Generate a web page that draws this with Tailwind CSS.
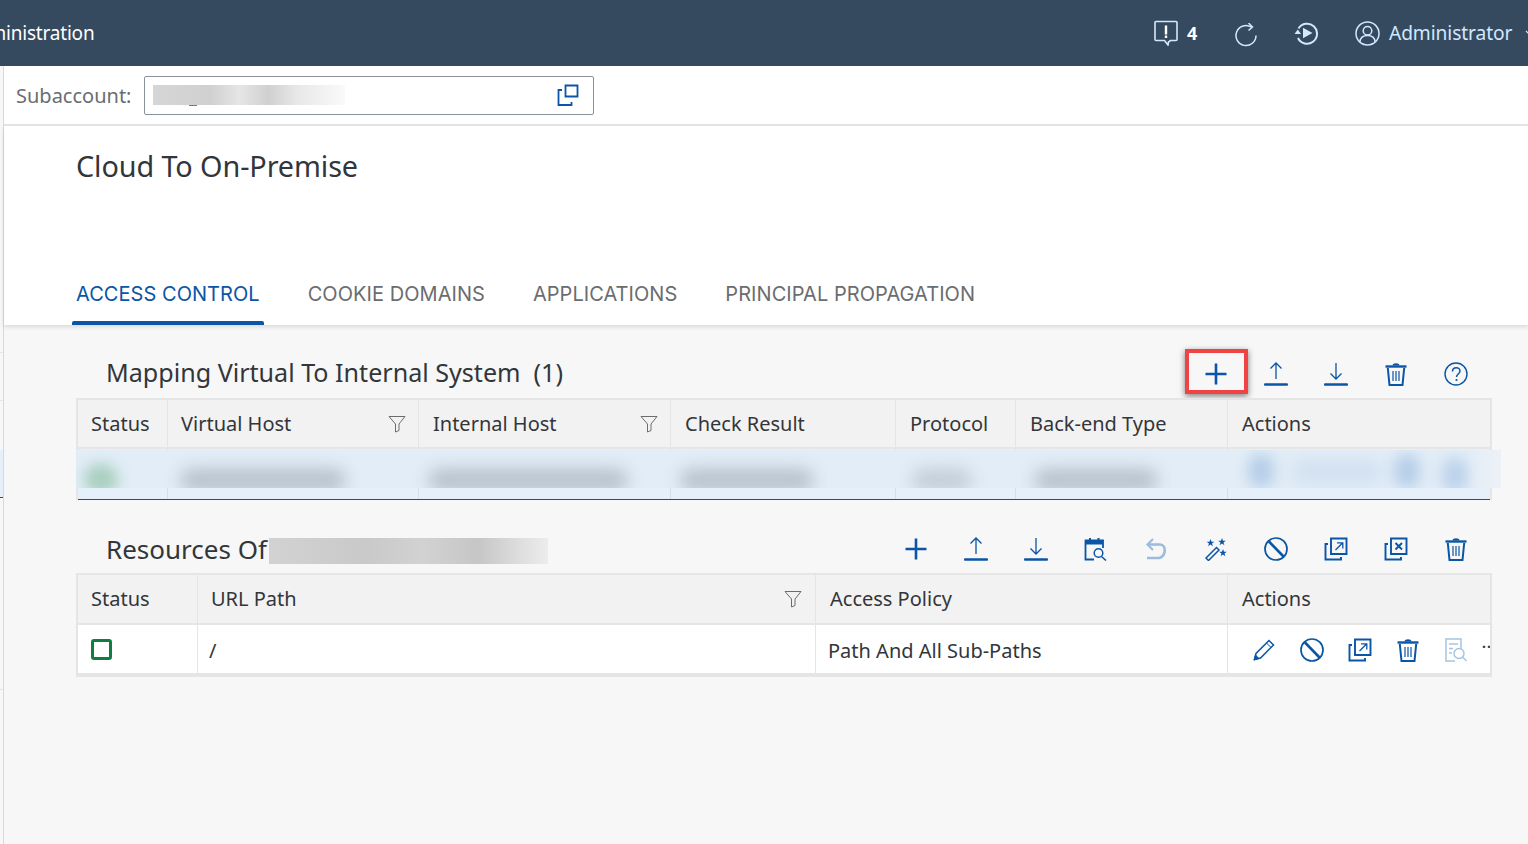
<!DOCTYPE html>
<html lang="en">
<head>
  <meta charset="UTF-8" />
  <title>Cloud To On-Premise</title>
  <script src="https://cdn.jsdelivr.net/npm/@tailwindcss/browser@4"></script>
</head>
<body class="bg-[#f7f7f7] font-['Noto_Sans',sans-serif] text-[#32363a] overflow-hidden">
  <svg class="hidden">
    <symbol id="plus" viewBox="0 0 24 24"><path d="M12 1.500v21M1.500 12h21" fill="none" stroke="currentColor" stroke-width="2.600"/></symbol>
    <symbol id="upload" viewBox="0 0 24 24"><path d="M12 1v16M6.500 6.500 12 1l5.500 5.500" fill="none" stroke="currentColor" stroke-width="1.300"/><path d="M1 22.500h22" stroke="currentColor" stroke-width="2.400" stroke-linecap="round"/></symbol>
    <symbol id="download" viewBox="0 0 24 24"><path d="M12 1v16M6.500 11.500 12 17l5.500-5.500" fill="none" stroke="currentColor" stroke-width="1.300"/><path d="M1 22.500h22" stroke="currentColor" stroke-width="2.400" stroke-linecap="round"/></symbol>
    <symbol id="trash" viewBox="0 0 24 24"><path d="M1.500 4.500h21" stroke="currentColor" stroke-width="2.400"/><path d="M8.500 3.500c0-3 7-3 7 0" fill="currentColor"/><path d="M3.800 6 5.500 23h13l1.700-17" fill="none" stroke="currentColor" stroke-width="2"/><path d="M9 9v10M12 9v10M15 9v10" stroke="currentColor" stroke-width="1.200"/></symbol>
    <symbol id="block" viewBox="0 0 24 24"><circle cx="12" cy="12" r="11" fill="none" stroke="currentColor" stroke-width="1.700"/><path d="m4.500 4 15.500 16" stroke="currentColor" stroke-width="2.600"/></symbol>
    <symbol id="popout" viewBox="0 0 24 24"><path d="M7 1.500h15.500V17H7z" fill="none" stroke="currentColor" stroke-width="1.900"/><path d="M4 7H1.500v15.500H17V20" fill="none" stroke="currentColor" stroke-width="1.900"/><path d="m11.500 13 7-7M13 5.800h5.800v5.800" fill="none" stroke="currentColor" stroke-width="1.300"/></symbol>
    <symbol id="filter" viewBox="0 0 18 18"><path d="M1 1.500h16l-6 7.500v6.500l-3.500 1.500V9z" fill="none" stroke="currentColor" stroke-width="1"/></symbol>
  </svg>

  <header class="h-[66px] bg-[#354a5f] flex items-center overflow-hidden text-[#d1e8ff]">
    <div class="ml-[-35px] w-[1196px] shrink-0 text-[19px] tracking-[-0.2px] text-white">Administration</div>
    <svg class="w-[26px] h-[26px] ml-[-8px] shrink-0" viewBox="0 0 26 26"><path d="M3 1.500h20a1 1 0 0 1 1 1v17a1 1 0 0 1-1 1h-5.500l-2 1.500-.5 3-3.500-4.500H3a1 1 0 0 1-1-1v-17a1 1 0 0 1 1-1z" fill="none" stroke="currentColor" stroke-width="1.600"/><path d="M13 5.500v9M13 15.500v2.500" stroke="#fff" stroke-width="2.400"/></svg>
    <span class="ml-[8px] text-[18px] font-bold text-white w-[12px] shrink-0">4</span>
    <svg class="w-[24px] h-[24px] ml-[35px] mt-[3px] shrink-0" viewBox="0 0 24 24"><path d="M17.500 4.200A10 10 0 1 0 22 12.500" fill="none" stroke="currentColor" stroke-width="1.500"/><path d="m14.500 0 4 4-4 3.500" fill="none" stroke="currentColor" stroke-width="1.500"/></svg>
    <svg class="w-[24px] h-[24px] ml-[36px] shrink-0" viewBox="0 0 24 24"><path d="M4.500 7.500A10 10 0 1 1 4 17" fill="none" stroke="currentColor" stroke-width="2"/><path d="M.5 13 3.800 8.500 7 13z" fill="currentColor"/><path d="M9 6.800v10.400l9.500-5.200z" fill="currentColor"/></svg>
    <svg class="w-[25px] h-[25px] ml-[37px] shrink-0" viewBox="0 0 25 25"><circle cx="12.500" cy="12.500" r="11.500" fill="none" stroke="currentColor" stroke-width="1.500"/><circle cx="12.500" cy="9.800" r="4.300" fill="none" stroke="currentColor" stroke-width="1.500"/><path d="M4.800 21c.5-4.500 3.500-6.500 7.700-6.500s7.200 2 7.700 6.500" fill="none" stroke="currentColor" stroke-width="1.500"/></svg>
    <span class="ml-[9px] text-[19.200px] tracking-[-0.1px] whitespace-nowrap shrink-0">Administrator</span>
    <svg class="w-[10px] h-[6px] ml-[13px] shrink-0" viewBox="0 0 10 6"><path d="m1 1 4 4 4-4" fill="none" stroke="currentColor" stroke-width="1.200"/></svg>
  </header>

  <div class="flex">
    <aside class="w-[4px] shrink-0 h-[778px] border-r border-[#d9d9d9] bg-[#f7f7f7] flex flex-col">
      <div class="h-[287px] border-b border-[#e5e5e5]"></div>
      <div class="h-[48px] border-b border-[#e5e5e5]"></div>
      <div class="h-[49px]"></div>
      <div class="h-[48px] bg-[#e5f0fa] border-b border-[#0a55a6]"></div>
      <div class="h-[192px] border-b border-[#e5e5e5]"></div>
    </aside>

    <main class="flex-1 min-w-0">
      <div class="h-[60px] bg-white border-b-2 border-[#e5e5e5] flex items-center pl-[12px]">
        <span class="text-[20px] text-[#6a6d70] w-[128px] pt-[2px]">Subaccount:</span>
        <div class="w-[450px] h-[39px] bg-white border border-[#89919a] rounded-[2px] flex items-center pl-[8px] pr-[14px] justify-between">
          <div class="relative w-[192px] h-[20px] bg-[linear-gradient(90deg,#d6d6d6,#d0d0d0_30%,#e6e6e6_45%,#d0d0d0_60%,#e8e8e8_75%,#fafafa)]">
            <div class="absolute left-[36px] top-[20px] w-[8px] h-[1px] bg-[#777]"></div>
          </div>
          <svg class="w-[22px] h-[22px] text-[#0a55a6]" viewBox="0 0 22 22"><path d="M5 6H1.500v15h13v-3" fill="none" stroke="currentColor" stroke-width="1.800"/><path d="M8.500 1.500h12v11h-12z" fill="none" stroke="currentColor" stroke-width="1.800"/></svg>
        </div>
      </div>

      <div class="h-[199px] bg-white shadow-[0_2px_4px_rgba(0,0,0,0.12)] relative flex flex-col justify-between pl-[72px]">
        <h1 class="text-[28.800px] leading-[40px] pt-[20px] box-content tracking-[-0.1px] text-[#32363a]">Cloud To On-Premise</h1>
        <nav class="flex gap-[48px] font-['Inter',sans-serif] text-[20px] tracking-[0.05px] leading-[28px] text-[#6a6d70] whitespace-nowrap">
          <div class="pb-[17px] text-[#0a55a6] relative">ACCESS CONTROL<div class="absolute left-[-4px] right-[-4px] bottom-0 h-[4px] rounded-t-[2px] bg-[#0a55a6]"></div></div>
          <div>COOKIE DOMAINS</div>
          <div>APPLICATIONS</div>
          <div>PRINCIPAL PROPAGATION</div>
        </nav>
      </div>

      <section class="pl-[72px] w-[1488px]">
        <div class="h-[73px] flex items-end pl-[30px] text-[#0a55a6]">
          <h2 class="text-[25.100px] leading-[48px] mb-[2px] text-[#32363a] whitespace-pre mr-auto">Mapping Virtual To Internal System  (1)</h2>
          <div class="flex items-center gap-[36px] h-[48px] pr-[24px] relative">
            <div class="absolute left-[-19px] top-[-1px] w-[63px] h-[45px] border-[4px] border-[#f04444] shadow-[0_2px_6px_rgba(0,0,0,0.5)]"></div>
            <svg class="w-[24px] h-[24px]"><use href="#plus"/></svg>
            <svg class="w-[24px] h-[24px]"><use href="#upload"/></svg>
            <svg class="w-[24px] h-[24px]"><use href="#download"/></svg>
            <svg class="w-[24px] h-[24px]"><use href="#trash"/></svg>
            <svg class="w-[24px] h-[24px]" viewBox="0 0 24 24"><circle cx="12" cy="12" r="11" fill="none" stroke="currentColor" stroke-width="1.400"/><path d="M8.500 9.500c0-5 7.500-5 7.500-.5 0 3-3.500 3-3.500 6" fill="none" stroke="currentColor" stroke-width="1.500"/><circle cx="12.500" cy="18" r="1.100" fill="currentColor"/></svg>
          </div>
        </div>

        <div class="relative border-x-2 border-[#e5e5e5]">
          <div class="grid grid-cols-[90px_251px_252px_225px_120px_212px_262px] h-[51px] bg-[#f2f2f2] border-y-2 border-[#e5e5e5] text-[20px] items-center">
            <div class="h-full flex items-center pl-[13px] border-r border-[#e5e5e5]">Status</div>
            <div class="h-full flex items-center justify-between pl-[13px] pr-[12px] border-r border-[#e5e5e5]">Virtual Host<svg class="w-[18px] h-[18px] text-[#6a6d70]"><use href="#filter"/></svg></div>
            <div class="h-full flex items-center justify-between pl-[14px] pr-[12px] border-r border-[#e5e5e5]">Internal Host<svg class="w-[18px] h-[18px] text-[#6a6d70]"><use href="#filter"/></svg></div>
            <div class="h-full flex items-center pl-[14px] border-r border-[#e5e5e5]">Check Result</div>
            <div class="h-full flex items-center pl-[14px] border-r border-[#e5e5e5]">Protocol</div>
            <div class="h-full flex items-center pl-[14px] border-r border-[#e5e5e5]">Back-end Type</div>
            <div class="h-full flex items-center pl-[14px]">Actions</div>
          </div>
          <div class="grid grid-cols-[90px_251px_252px_225px_120px_212px_262px] h-[51px] bg-[#e5f0fa] border-b border-[#0a55a6]">
            <div class="border-r border-[#d5dfe8]"></div><div class="border-r border-[#d5dfe8]"></div><div class="border-r border-[#d5dfe8]"></div><div class="border-r border-[#d5dfe8]"></div><div class="border-r border-[#d5dfe8]"></div><div class="border-r border-[#d5dfe8]"></div><div></div>
          </div>
          <div class="absolute left-[-2px] top-[52px] w-[1425px] h-[38px] bg-[#e2edf7] overflow-hidden">
            <div class="absolute left-[8px] top-[14px] w-[34px] h-[30px] rounded-full bg-[#a9cfbf] blur-[7px]"></div>
            <div class="absolute left-[104px] top-[18px] w-[166px] h-[24px] rounded-full bg-[#b9c4cf] blur-[8px]"></div>
            <div class="absolute left-[352px] top-[18px] w-[200px] h-[24px] rounded-full bg-[#b9c4cf] blur-[8px]"></div>
            <div class="absolute left-[604px] top-[18px] w-[134px] h-[24px] rounded-full bg-[#b9c4cf] blur-[8px]"></div>
            <div class="absolute left-[836px] top-[18px] w-[60px] h-[24px] rounded-full bg-[#c4cfd9] blur-[8px]"></div>
            <div class="absolute left-[958px] top-[18px] w-[124px] h-[24px] rounded-full bg-[#b9c4cf] blur-[8px]"></div>
            <div class="absolute left-[1172px] top-[4px] w-[26px] h-[34px] rounded-full bg-[#b6cee8] blur-[7px]"></div>
            <div class="absolute left-[1216px] top-[10px] w-[90px] h-[24px] rounded-full bg-[#d2e1f0] blur-[8px]"></div>
            <div class="absolute left-[1318px] top-[4px] w-[26px] h-[34px] rounded-full bg-[#b6cee8] blur-[7px]"></div>
            <div class="absolute left-[1366px] top-[8px] w-[26px] h-[34px] rounded-full bg-[#bcd2ea] blur-[7px]"></div>
            <div class="absolute right-0 top-0 w-[34px] h-full bg-gradient-to-r from-transparent to-[#edf1f6]"></div>
          </div>
        </div>

        <div class="h-[73px] flex items-end pl-[30px] text-[#0a55a6]">
          <h2 class="text-[26px] leading-[48px] text-[#32363a] whitespace-nowrap">Resources Of</h2>
          <div class="w-[279px] h-[26px] mb-[9px] ml-[2px] mr-auto bg-[linear-gradient(90deg,#d2d2d2,#c9c9c9_35%,#d2d2d2_55%,#c6c6c6_75%,#dedede_90%,#ececec)]"></div>
          <div class="flex items-center gap-[36px] h-[48px] pr-[24px]">
            <svg class="w-[24px] h-[24px]"><use href="#plus"/></svg>
            <svg class="w-[24px] h-[24px]"><use href="#upload"/></svg>
            <svg class="w-[24px] h-[24px]"><use href="#download"/></svg>
            <svg class="w-[24px] h-[24px]" viewBox="0 0 24 24"><path d="M10 22.500H1.500V3.500h17.500V11" fill="none" stroke="currentColor" stroke-width="1.800"/><path d="M1.500 3.500h17.500v4H1.500z" fill="currentColor"/><path d="M6 1v3M14.500 1v3" stroke="currentColor" stroke-width="2"/><circle cx="14.500" cy="16" r="4.300" fill="none" stroke="currentColor" stroke-width="1.500"/><path d="m17.500 19.500 4.500 4" stroke="currentColor" stroke-width="1.500"/></svg>
            <svg class="w-[24px] h-[24px] text-[#9dbbdb]" viewBox="0 0 24 24"><path d="M9 2 3.500 7.500 9 13" fill="none" stroke="currentColor" stroke-width="2.200"/><path d="M3.500 7.500h12c7 0 7 10.500 0 13.500H3" fill="none" stroke="currentColor" stroke-width="2.600"/></svg>
            <svg class="w-[24px] h-[24px]" viewBox="0 0 24 24"><path d="m2 21 10.500-10.500 2.500 2.500L4.500 23.500z" fill="none" stroke="currentColor" stroke-width="1.500"/><path d="m6.500 2 1 2.700h2.800l-2.300 1.700.9 2.800-2.400-1.700-2.400 1.700.9-2.800-2.300-1.700h2.800zM18 1l1 2.700h2.800l-2.300 1.700.9 2.800-2.400-1.700-2.400 1.700.9-2.800-2.300-1.700H17zM19 12l1 2.700h2.800l-2.300 1.700.9 2.800-2.400-1.700-2.400 1.700.9-2.800-2.300-1.700H18z" fill="currentColor"/></svg>
            <svg class="w-[24px] h-[24px]"><use href="#block"/></svg>
            <svg class="w-[24px] h-[24px]"><use href="#popout"/></svg>
            <svg class="w-[24px] h-[24px]" viewBox="0 0 24 24"><path d="M7 1.500h15.500V17H7z" fill="none" stroke="currentColor" stroke-width="1.900"/><path d="M4 7H1.500v15.500H17V20" fill="none" stroke="currentColor" stroke-width="1.900"/><path d="m11.500 6 6.500 6.500M18 6l-6.500 6.500" stroke="currentColor" stroke-width="1.900"/></svg>
            <svg class="w-[24px] h-[24px]"><use href="#trash"/></svg>
          </div>
        </div>

        <div class="border-x-2 border-b-2 border-[#e5e5e5]">
          <div class="grid grid-cols-[120px_618px_412px_262px] h-[52px] bg-[#f2f2f2] border-y-2 border-[#e5e5e5] text-[20px]">
            <div class="flex items-center pl-[13px] border-r border-[#e5e5e5]">Status</div>
            <div class="flex items-center justify-between pl-[13px] pr-[13px] border-r border-[#e5e5e5]">URL Path<svg class="w-[18px] h-[18px] text-[#6a6d70]"><use href="#filter"/></svg></div>
            <div class="flex items-center pl-[14px] border-r border-[#e5e5e5]">Access Policy</div>
            <div class="flex items-center pl-[14px]">Actions</div>
          </div>
          <div class="grid grid-cols-[120px_618px_412px_262px] h-[50px] bg-white border-b-2 border-[#e5e5e5] text-[20px]">
            <div class="flex items-center pl-[13px] border-r border-[#e5e5e5]"><div class="w-[21px] h-[21px] rounded-[3px] border-[3px] border-[#107e3e]"></div></div>
            <div class="flex items-center pl-[11px] pt-[3px] border-r border-[#e5e5e5]">/</div>
            <div class="flex items-center pl-[12px] pt-[3px] border-r border-[#e5e5e5]">Path And All Sub-Paths</div>
            <div class="flex items-center gap-[24px] pl-[24px] pt-[2px] overflow-hidden text-[#0a55a6] relative">
              <svg class="w-[24px] h-[24px] shrink-0" viewBox="0 0 24 24"><path d="m2.500 21.500 1.500-6L17 2.500l4.500 4.500-13 13z" fill="none" stroke="currentColor" stroke-width="1.500"/><path d="m14.500 5 4.500 4.500M2 22l5-1.500L3.500 17z" fill="currentColor" stroke="currentColor" stroke-width="1"/></svg>
              <svg class="w-[24px] h-[24px] shrink-0"><use href="#block"/></svg>
              <svg class="w-[24px] h-[24px] shrink-0"><use href="#popout"/></svg>
              <svg class="w-[24px] h-[24px] shrink-0"><use href="#trash"/></svg>
              <svg class="w-[24px] h-[24px] shrink-0 text-[#a5c3e0]" viewBox="0 0 24 24"><path d="M11 23H2V1h15v10" fill="none" stroke="currentColor" stroke-width="1.500"/><path d="M5 6h9M5 10.500h4M5 15h3" stroke="currentColor" stroke-width="1.500"/><circle cx="15" cy="15.500" r="5" fill="none" stroke="currentColor" stroke-width="1.400"/><path d="m18.500 19 4 4" stroke="currentColor" stroke-width="1.400"/></svg>
              <span class="absolute left-[254px] top-[12px] text-[#32363a] text-[14px] font-bold tracking-[1px] leading-[20px] whitespace-nowrap">··</span>
            </div>
          </div>
        </div>
      </section>
    </main>
  </div>
</body>
</html>
